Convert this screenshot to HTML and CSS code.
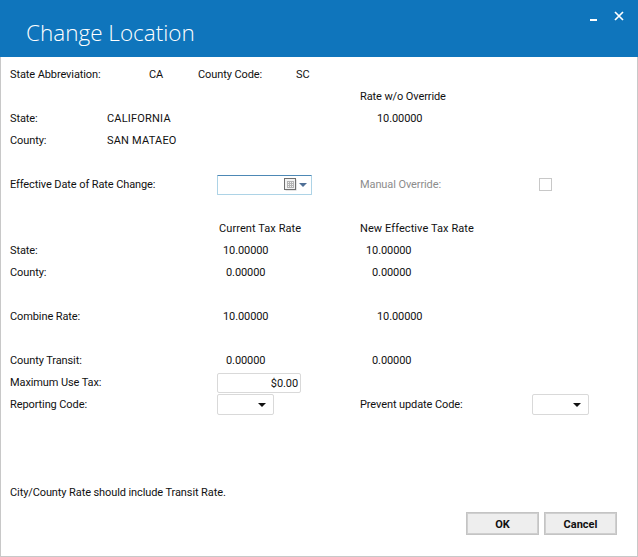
FILE: index.html
```html
<!DOCTYPE html>
<html>
<head>
    <meta name="viewport" content="width=device-width, initial-scale=1.0">
    <link rel="stylesheet" href="styles.css">
</head>

<body>
    <div class="window">
        <div class="titlebar">
            <h1 class="title">Change Location</h1>
            <div class="window-buttons">
                <svg width="7" height="2" viewBox="0 0 7 2"><rect width="7" height="2" fill="#fff"/></svg>
                <svg width="10" height="10" viewBox="0 0 10 10"><path d="M1 1 L9 9 M9 1 L1 9" stroke="#fff" stroke-width="1.7" fill="none"/></svg>
            </div>
        </div>

        <div class="form">
            <div class="row">
                <span class="c1">State Abbreviation:</span>
                <span class="c3">CA</span>
                <span class="c4">County Code:</span>
                <span class="c6">SC</span>
            </div>
            <div class="row">
                <span class="c7">Rate w/o Override</span>
            </div>
            <div class="row">
                <span class="c1">State:</span>
                <span class="c2 caps">CALIFORNIA</span>
                <span class="c7 pad-17">10.00000</span>
            </div>
            <div class="row">
                <span class="c1">County:</span>
                <span class="c2 caps">SAN MATAEO</span>
            </div>

            <div class="row gap">
                <span class="c1">Effective Date of Rate Change:</span>
                <div class="c5 date-input">
                    <svg width="13" height="13" viewBox="0 0 13 13">
                        <rect x="1.5" y="1.5" width="11" height="11" fill="#c9c9c9"/>
                        <rect x="0.5" y="0.5" width="11" height="11" fill="#f2f2f2" stroke="#6f6f6f"/>
                        <path d="M3 3.5H10M3 5.5H10M3 7.5H10M3 9.5H10M3.5 3V10M5.5 3V10M7.5 3V10M9.5 3V10" stroke="#b4b4b4" stroke-width="1"/>
                    </svg>
                    <span class="arrow blue"></span>
                </div>
                <span class="c7 disabled">Manual Override:</span>
                <div class="c8 checkbox"></div>
            </div>

            <div class="row gap">
                <span class="c5 pad-2 heading">Current Tax Rate</span>
                <span class="c7 heading">New Effective Tax Rate</span>
            </div>
            <div class="row">
                <span class="c1">State:</span>
                <span class="c5 pad-6">10.00000</span>
                <span class="c7 pad-6">10.00000</span>
            </div>
            <div class="row">
                <span class="c1">County:</span>
                <span class="c5 pad-9">0.00000</span>
                <span class="c7 pad-12">0.00000</span>
            </div>

            <div class="row gap">
                <span class="c1">Combine Rate:</span>
                <span class="c5 pad-6">10.00000</span>
                <span class="c7 pad-17">10.00000</span>
            </div>

            <div class="row gap">
                <span class="c1">County Transit:</span>
                <span class="c5 pad-9">0.00000</span>
                <span class="c7 pad-12">0.00000</span>
            </div>
            <div class="row">
                <span class="c1">Maximum Use Tax:</span>
                <div class="c5 money-input">$0.00</div>
            </div>
            <div class="row">
                <span class="c1">Reporting Code:</span>
                <div class="c5 select"><span class="arrow"></span></div>
                <span class="c7">Prevent update Code:</span>
                <div class="c8 select"><span class="arrow"></span></div>
            </div>

            <div class="note">City/County Rate should include Transit Rate.</div>

            <div class="actions">
                <button class="btn">OK</button>
                <button class="btn">Cancel</button>
            </div>
        </div>
    </div>
</body>
</html>
```

FILE: styles.css
```css
* {
    margin: 0;
    padding: 0;
    box-sizing: border-box;
    font-family: Roboto, "Noto Sans", sans-serif;
}

body {
    background: #fff;
    color: #111;
    font-size: 11px;
    letter-spacing: -0.1px;
    line-height: 22px;
}

.window {
    width: 638px;
    height: 557px;
    border: 1px solid #c8c8c8;
    border-top: none;
}

.titlebar {
    height: 57px;
    margin: 0 -1px;
    background: #0f75bc;
    color: #fff;
    display: flex;
    justify-content: space-between;
}

.title {
    font-family: "Open Sans", sans-serif;
    font-size: 22.5px;
    font-weight: 300;
    letter-spacing: 0;
    line-height: 33px;
    padding: 16px 0 0 26px;
}

.window-buttons {
    display: flex;
    gap: 17px;
    align-items: flex-end;
    height: 21px;
    padding: 11px 14px 0 0;
}

.form {
    padding: 6px 19px 0 9px;
}

.row {
    height: 22px;
    display: grid;
    grid-template-columns: 97px 42px 49px 19px 143px 172px 1fr;
    align-items: center;
    white-space: nowrap;
}

.row > * { grid-row: 1; }
.row > span { padding-top: 1px; }

.gap { margin-top: 22px; }

.c1 { grid-column: 1 / 3; }
.c2 { grid-column: 2 / 4; }
.c3 { grid-column: 3; }
.c4 { grid-column: 4; }
.c5 { grid-column: 5; }
.c6 { grid-column: 5; padding-left: 79px; }
.c7 { grid-column: 6; }
.c8 { grid-column: 7; }

.pad-2 { padding-left: 2px; }
.pad-6 { padding-left: 6px; }
.pad-9 { padding-left: 9px; }
.pad-12 { padding-left: 12px; }
.pad-17 { padding-left: 17px; }

.caps { letter-spacing: 0.2px; }
.heading { letter-spacing: 0.08px; }
.disabled { color: #8c8c8c; }

.date-input {
    width: 95px;
    height: 20px;
    border: 1px solid #add3e6;
    border-top-color: #4d88b5;
    border-radius: 1px;
    display: flex;
    align-items: center;
    justify-content: flex-end;
    gap: 2px;
    padding-right: 4px;
}

.money-input {
    width: 84px;
    height: 20px;
    border: 1px solid #d9d9d9;
    border-radius: 2px;
    text-align: right;
    line-height: 19px;
    padding-right: 2px;
}

.select {
    width: 57px;
    height: 21px;
    border: 1px solid #d9d9d9;
    border-radius: 2px;
    display: flex;
    align-items: center;
    justify-content: flex-end;
    padding-right: 7px;
}

.arrow {
    width: 0;
    height: 0;
    border-left: 4px solid transparent;
    border-right: 4px solid transparent;
    border-top: 4px solid #111;
}

.arrow.blue { border-top-color: #4f6f96; }

.checkbox {
    width: 13px;
    height: 13px;
    margin-left: 7px;
    border: 1px solid #c8c8c8;
}

.note {
    margin-top: 66px;
    height: 22px;
    padding-top: 1px;
}

.actions {
    display: flex;
    justify-content: flex-end;
    gap: 5px;
    margin: 9px 1px 0 0;
}

.btn {
    width: 73px;
    height: 23px;
    padding-top: 1px;
    background: #eee;
    border: 1px solid #c4c4c4;
    box-shadow: inset 0 0 0 1px #cfcfcf;
    color: #111;
    font-size: 11px;
    font-weight: 700;
}
```
